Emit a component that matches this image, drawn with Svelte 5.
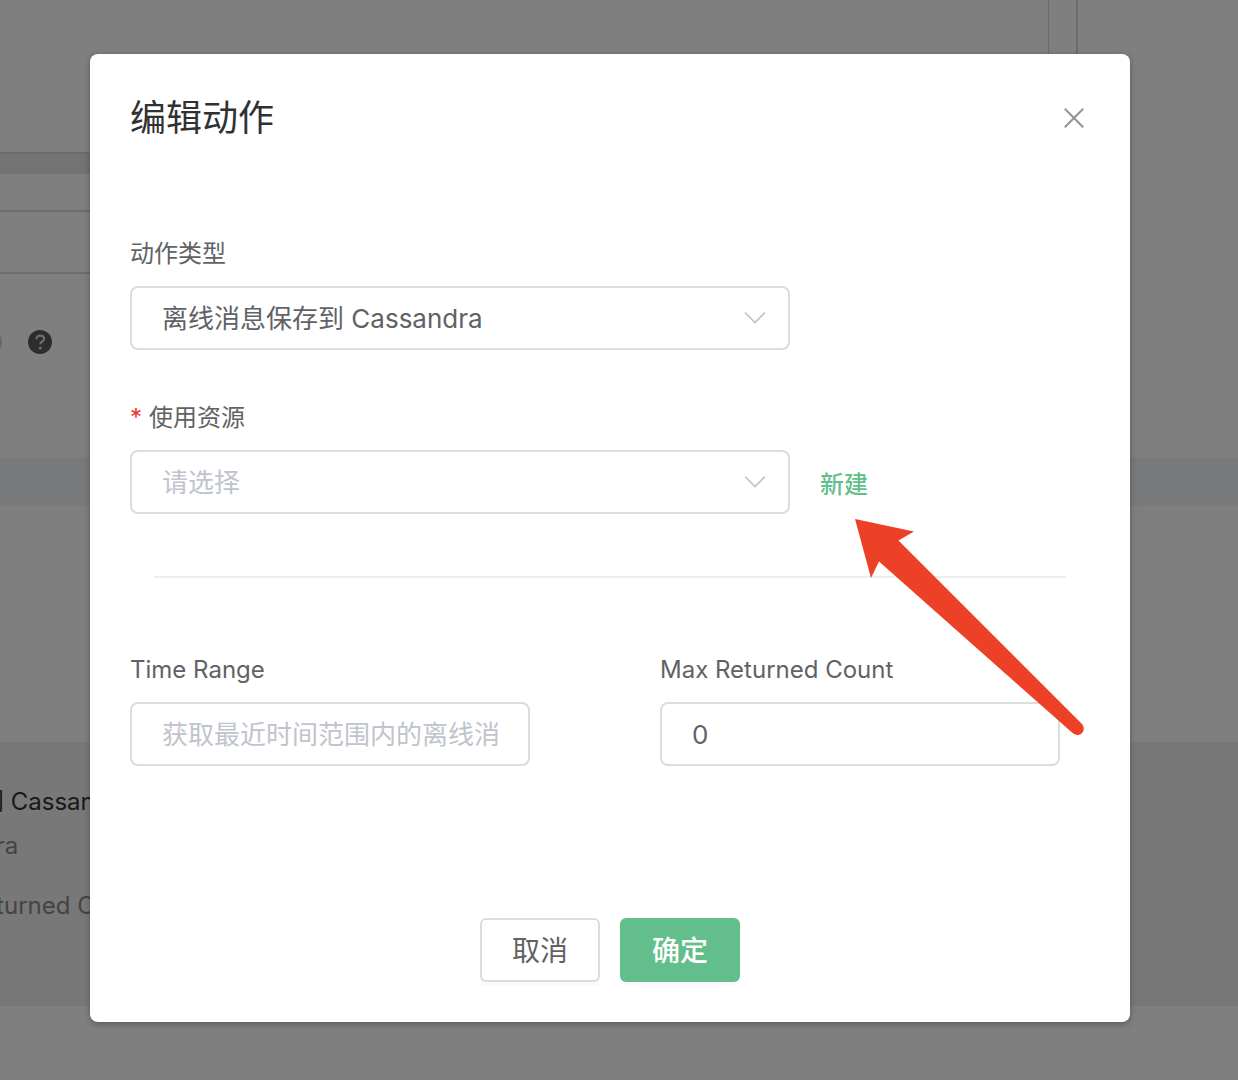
<script>
  let actionType = $state('cassandra');
  let resource = $state('');
  let timeRange = $state('');
  let maxCount = $state('0');
</script>

{#snippet chevron()}
  <svg class="chevron" viewBox="0 0 22 14" aria-hidden="true">
    <path d="M1 1.5 11 11.5 21 1.5" fill="none" stroke="#c0c4cc" stroke-width="1.7" />
  </svg>
{/snippet}

<div class="page">
  <div class="behind" aria-hidden="true">
    <div class="editor"><div class="gutter"></div></div>
    <div class="strip"></div>
    <div class="line-row short"></div>
    <div class="line-row"></div>
    <div class="help-row">
      <span class="knob"></span>
      <svg class="help" viewBox="0 0 24 24">
        <circle cx="12" cy="12" r="12" fill="#5a5a5a" />
        <path d="M8.500 9.200C8.500 7 10 5.600 12.200 5.600s3.900 1.300 3.900 3.300c0 2.400-3.800 2.600-3.800 5.300" fill="none" stroke="#ddd" stroke-width="2.100" />
        <circle cx="12.200" cy="18" r="1.500" fill="#ddd" />
      </svg>
    </div>
    <div class="table-head"></div>
    <div class="table-body"></div>
    <div class="action-card">
      <p class="name">离线消息保存到 Cassandra</p>
      <p class="kind">Cassandra</p>
      <p class="param">Max Returned Count</p>
    </div>
  </div>

  <div class="overlay">
    <div class="dialog" role="dialog" aria-modal="true" aria-labelledby="title">
      <header>
        <h1 id="title">编辑动作</h1>
        <button class="close" type="button" aria-label="关闭">
          <svg viewBox="0 0 20 20"><path d="M.8.8 19.2 19.2M19.2.8.8 19.2" stroke="#909399" stroke-width="2" /></svg>
        </button>
      </header>

      <form>
        <div class="field">
          <label for="type">动作类型</label>
          <div class="select">
            <select id="type" bind:value={actionType}>
              <option value="cassandra">离线消息保存到 Cassandra</option>
            </select>
            {@render chevron()}
          </div>
        </div>

        <div class="field">
          <label for="resource"><span class="star">*</span>使用资源</label>
          <div class="inline">
            <div class="select">
              <select id="resource" class:empty={resource === ''} bind:value={resource}>
                <option value="">请选择</option>
              </select>
              {@render chevron()}
            </div>
            <a href="#create">新建</a>
          </div>
        </div>

        <hr />

        <div class="columns">
          <div class="field">
            <label for="range">Time Range</label>
            <input id="range" type="text" placeholder="获取最近时间范围内的离线消息" bind:value={timeRange} />
          </div>
          <div class="field">
            <label for="count">Max Returned Count</label>
            <input id="count" type="text" bind:value={maxCount} />
          </div>
        </div>

        <footer>
          <button class="btn" type="button">取消</button>
          <button class="btn primary" type="button">确定</button>
        </footer>
      </form>

      <svg class="arrow" viewBox="0 0 230 218" aria-hidden="true">
        <path d="M0 0 59 12.5 43.5 21.5 226 204C229 207 230 211 227 214 224 217 220 216.500 217 213.500L24 42.500 16 59Z" fill="#ec4127" />
      </svg>
    </div>
  </div>
</div>

<style>
  :global(body) {
    background: #fff;
    font-family: Inter, "Noto Sans CJK SC", sans-serif;
    color: #606266;
  }
  .page {
    position: relative;
    min-height: 100vh;
    overflow: hidden;
  }
  .page *, .page {
    box-sizing: border-box;
  }
  .behind {
    position: absolute;
    inset: 0;
    overflow: hidden;
  }
  .editor {
    display: flex;
    justify-content: flex-end;
    height: 154px;
    margin-right: 160px;
    border-right: 2px solid #d8d8d8;
    border-bottom: 2px solid #d8d8d8;
  }
  .gutter {
    width: 28px;
    border-left: 1px solid #d8d8d8;
  }
  .strip {
    height: 20px;
    margin-right: 160px;
    background: #e6e6e6;
  }
  .line-row {
    height: 62px;
    margin-right: 160px;
    border-bottom: 2px solid #d8d8d8;
  }
  .line-row.short {
    height: 38px;
  }
  .help-row {
    display: flex;
    align-items: center;
    gap: 26px;
    height: 184px;
    padding-bottom: 48px;
  }
  .knob {
    width: 24px;
    height: 24px;
    margin-left: -22px;
    border-radius: 50%;
    background: #d0d0d0;
  }
  .help {
    width: 24px;
    height: 24px;
  }
  .table-head {
    height: 48px;
    background: #f0f2f5;
  }
  .table-body {
    height: 236px;
  }
  .action-card {
    height: 264px;
    padding-top: 44px;
    background: #f0f0f0;
    font-size: 24px;
    line-height: 32px;
    white-space: nowrap;
    color: #888;
  }
  .action-card p {
    margin: 0;
  }
  .action-card .name {
    margin-left: -164px;
    color: #333;
  }
  .action-card .kind {
    margin: 12px 0 28px -103px;
  }
  .action-card .param {
    margin-left: -88px;
  }
  .overlay {
    position: relative;
    padding: 54px 108px 58px 90px;
    min-height: 100vh;
    background: rgba(0, 0, 0, 0.5);
  }
  .dialog {
    position: relative;
    padding: 40px;
    border-radius: 8px;
    background: #fff;
    box-shadow: 0 2px 6px rgba(0, 0, 0, 0.3);
  }
  header {
    display: flex;
    align-items: center;
    justify-content: space-between;
    height: 48px;
    padding-right: 6px;
    margin-bottom: 96px;
  }
  h1 {
    margin: 0;
    font-size: 36px;
    line-height: 48px;
    font-weight: 400;
    color: #303133;
  }
  .close {
    display: flex;
    padding: 0;
    border: 0;
    background: none;
  }
  .close svg {
    width: 20px;
    height: 20px;
  }
  .field {
    display: flex;
    flex-direction: column;
    gap: 16px;
    margin-bottom: 52px;
  }
  label {
    font-size: 24px;
    line-height: 32px;
  }
  .star {
    margin-right: 7px;
    color: #e8352e;
  }
  .inline {
    display: flex;
    align-items: center;
    gap: 30px;
  }
  .select {
    position: relative;
    width: 660px;
    max-width: 100%;
  }
  select, input {
    display: block;
    width: 100%;
    height: 64px;
    padding: 0 30px;
    border: 2px solid #dcdcdc;
    border-radius: 8px;
    background: #fff;
    font: inherit;
    font-size: 26px;
    color: #606266;
    appearance: none;
  }
  .empty, input::placeholder {
    color: #c0c4cc;
    opacity: 1;
  }
  .chevron {
    position: absolute;
    top: 25px;
    right: 24px;
    width: 22px;
    height: 14px;
    pointer-events: none;
  }
  a {
    font-size: 24px;
    font-weight: 500;
    color: #62bf8c;
    text-decoration: none;
  }
  hr {
    height: 2px;
    margin: 62px 24px 76px;
    border: 0;
    background: #ededf2;
  }
  .columns {
    display: grid;
    grid-template-columns: 400px 400px;
    gap: 130px;
  }
  .columns .field {
    margin-bottom: 0;
  }
  footer {
    display: flex;
    justify-content: center;
    gap: 20px;
    margin-top: 152px;
  }
  .btn {
    width: 120px;
    height: 64px;
    padding: 0 0 2px;
    border: 2px solid #dcdcdc;
    border-radius: 6px;
    background: #fff;
    box-shadow: 0 4px 0 rgba(0, 0, 0, 0.02);
    font: inherit;
    font-size: 28px;
    color: #606266;
  }
  .primary {
    border-color: #62bf8c;
    background: #62bf8c;
    font-weight: 500;
    color: #fff;
  }
  .arrow {
    position: absolute;
    top: 465px;
    left: 765px;
    width: 230px;
    height: 218px;
    pointer-events: none;
  }
</style>
